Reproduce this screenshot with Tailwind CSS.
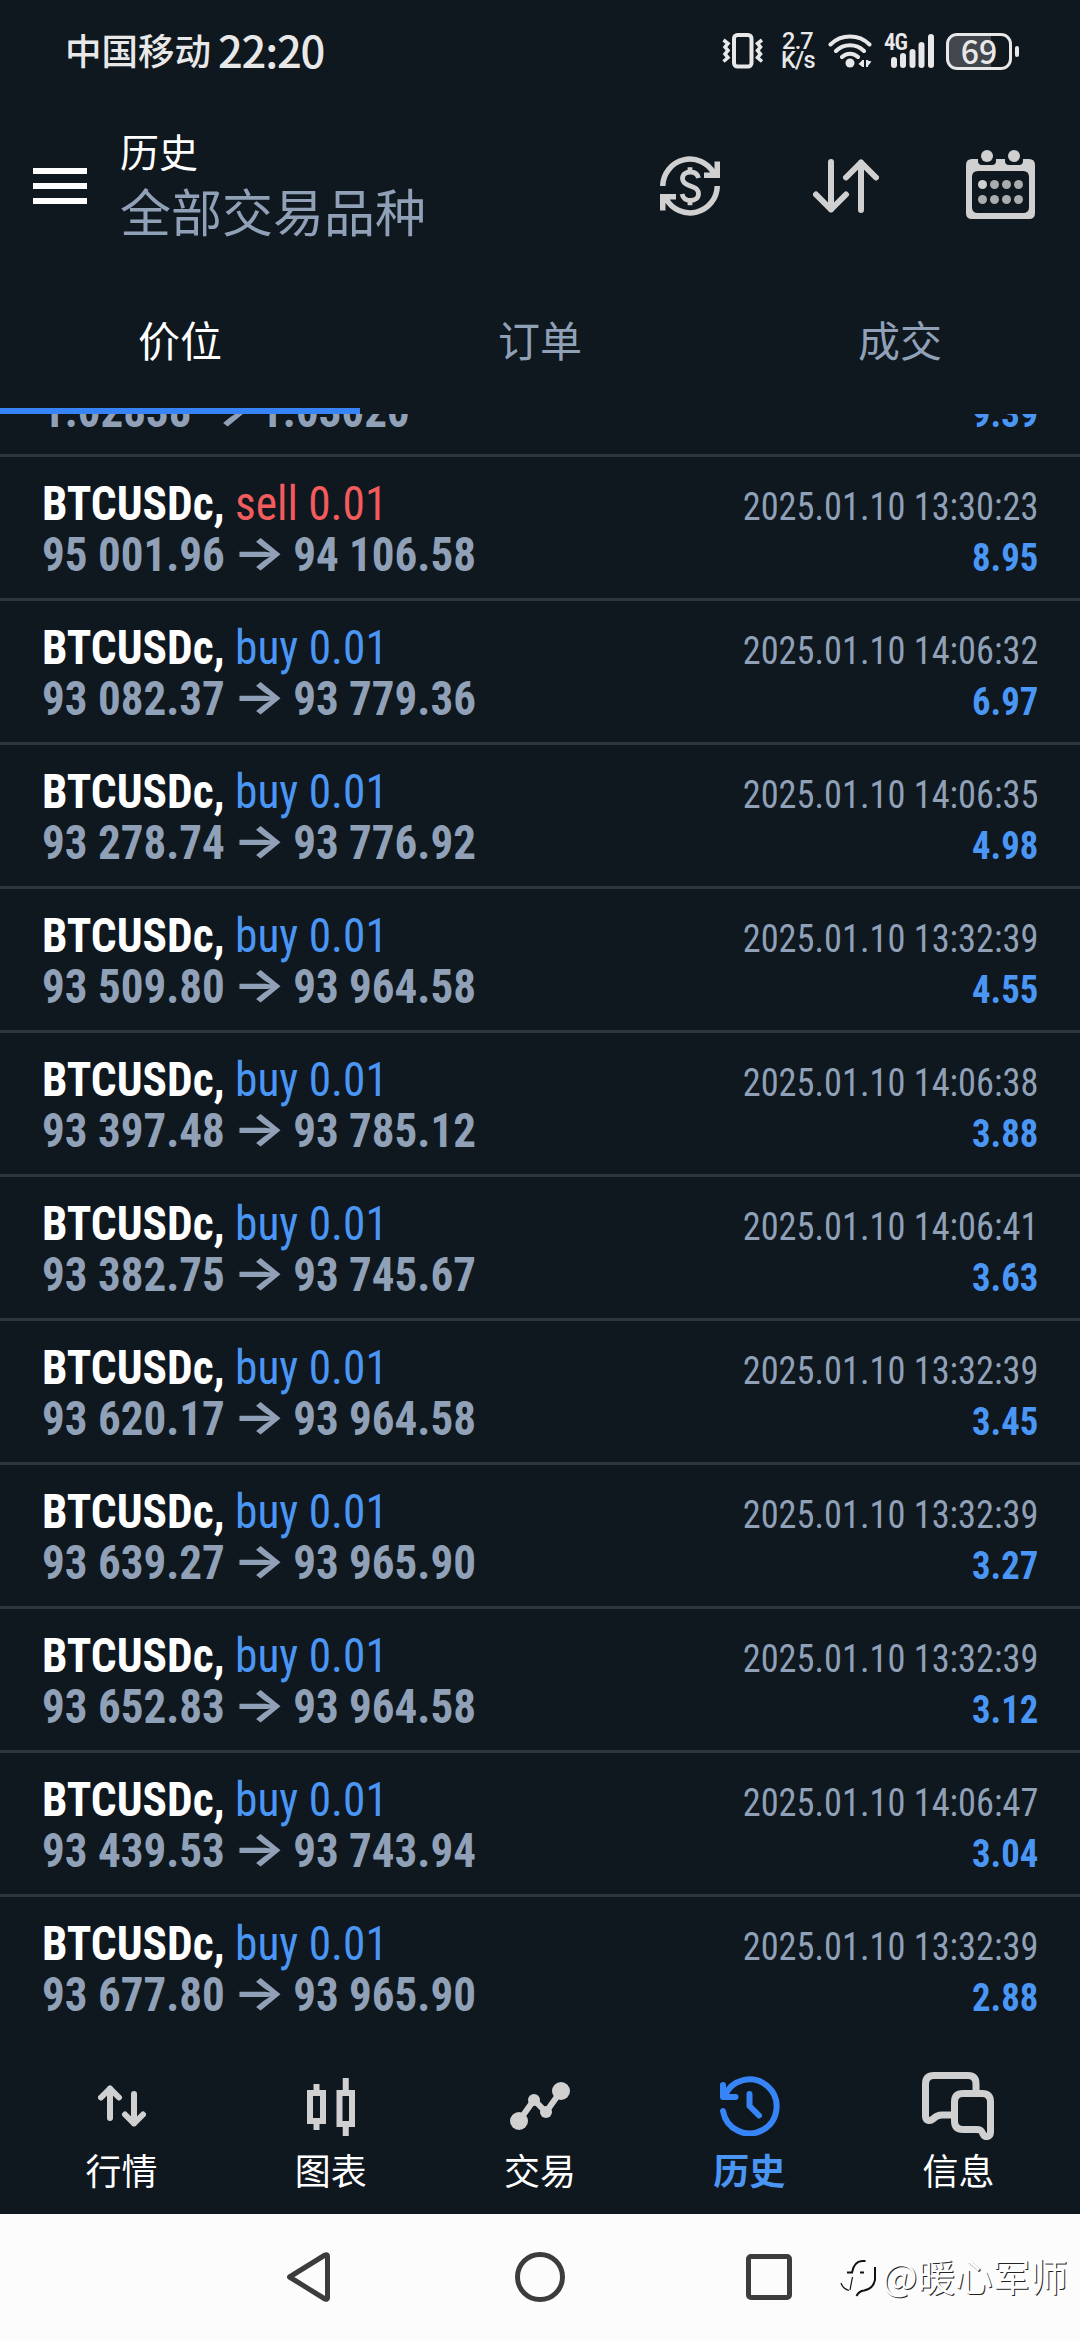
<!DOCTYPE html>
<html lang="zh-CN">
<head>
<meta charset="utf-8">
<title>历史</title>
<script src="https://cdn.jsdelivr.net/npm/@tailwindcss/browser@4"></script>
</head>
<body class="w-[1080px] h-[2340px] overflow-hidden bg-[#0f171f] font-['Noto_Sans_CJK_SC',sans-serif] text-white flex flex-col">

<!-- status bar -->
<header class="h-[102px] shrink-0 flex items-center pl-[65px] pr-[61px] text-[#e8e8e8]">
  <span class="text-[36.5px] font-medium leading-none -mt-[2px]">中国移动</span>
  <span class="ml-[7px] text-[43.5px] font-medium leading-none tracking-[-1.2px] -mt-[2px]">22:20</span>
  <div class="ml-auto flex items-center">
    <svg class="w-[42px] h-[36px]" viewBox="0 0 42 36" fill="none" stroke="#e8e8e8">
      <rect x="12" y="2" width="17.5" height="31.5" rx="3.5" stroke-width="4"/>
      <path d="M1.5 7l4.5 3.500-3 3.500 3 3.500-3 3.500 3 3.500-4.500 4M40 7l-4.500 3.500 3 3.500-3 3.500 3 3.500-3 3.500 4.500 4" stroke-width="3.500"/>
    </svg>
    <div class="ml-[17px] w-[33px] text-[23.500px] leading-[19px] font-medium text-center font-['Roboto'] tracking-[-0.8px] whitespace-nowrap"><div>2.7</div><div>K/s</div></div>
    <svg class="ml-[14px] w-[45px] h-[36px]" viewBox="0 0 45 36" fill="none" stroke="#e8e8e8" stroke-linecap="round" stroke-width="4">
      <path d="M2.500 11.500a28 28 0 0 1 39 0M8 18a20 20 0 0 1 28 0M14 24a11.500 11.500 0 0 1 16 0"/>
      <circle cx="22" cy="30" r="4.500" fill="#e8e8e8" stroke="none"/>
      <path d="M30.500 31l3.500-3.500v6zM43.500 28.500l-4 5v-6z" fill="#e8e8e8" stroke="none"/><path d="M35 27v7M39 27v7" stroke-width="2" stroke-linecap="butt"/>
    </svg>
    <div class="relative ml-[11px] w-[50px] h-[36px]">
      <span class="absolute left-0 top-0 text-[23px] leading-[19px] font-semibold tracking-[-1px] font-['Roboto'] font-stretch-[85%]">4G</span>
      <svg class="absolute inset-0" viewBox="0 0 50 36" fill="#e8e8e8"><rect x="7" y="24" width="6" height="11" rx="3"/><rect x="16" y="20" width="6" height="15" rx="3"/><rect x="25.500" y="16" width="6" height="19" rx="3"/><rect x="34.500" y="9" width="6" height="26" rx="3"/><rect x="44" y="1" width="6" height="34" rx="3"/></svg>
    </div>
    <div class="ml-[12px] w-[66px] h-[37px] rounded-[11px] border-[3px] border-[#e8e8e8] bg-linear-to-r from-[#41474d] from-70% to-transparent to-70% flex items-center justify-center text-[32px] font-medium leading-none"><span class="-mt-[3px]">69</span></div>
    <div class="ml-[3px] w-[4px] h-[11px] rounded bg-[#e8e8e8]"></div>
  </div>
</header>

<!-- app bar -->
<div class="h-[168px] shrink-0 flex pl-[33px] pr-[45px]">
  <div class="mt-[66px] flex flex-col gap-[9px]"><i class="block w-[54px] h-[6px] bg-white"></i><i class="block w-[54px] h-[6px] bg-white"></i><i class="block w-[54px] h-[6px] bg-white"></i></div>
  <div class="ml-[33px] mt-[20px]">
    <h1 class="text-[39px] leading-[56px]">历史</h1>
    <p class="text-[51px] leading-[64px] text-[#90a1b7]">全部交易品种</p>
  </div>
  <div class="ml-auto flex items-start">
    <svg class="mt-[54px] w-[60px] h-[60px]" viewBox="0 0 60 60" fill="none" stroke="#d0d0d0" stroke-width="5.500">
      <path d="M2.750 30A27.250 27.250 0 0 1 54 17.500M57.250 5.500V19.250H44"/>
      <path d="M57.250 30A27.250 27.250 0 0 1 6 42.500M2.750 54.500V40.750H16"/>
      <path d="M38.500 22C37.500 18 34.500 16 30.500 16C26 16 22.500 18.500 22.500 22.500C22.500 26 25 27.800 28.500 29.200L33 31C36.500 32.300 38.500 34.500 38.500 37.700C38.500 42 35 44.500 30.500 44.500C26 44.500 23 42 22 38M30 11.300V17M30 44V49.300" stroke-width="4.800"/>
    </svg>
    <svg class="ml-[93px] mt-[57px] w-[66px] h-[54px]" viewBox="0 0 66 54" fill="none" stroke="#d0d0d0" stroke-width="6" stroke-linecap="round" stroke-linejoin="round">
      <path d="M18 3V50.500M3 35.500L18 50.500L33 35.500M48 51V3.500M33 18.500L48 3.500L63 18.500"/>
    </svg>
    <svg class="ml-[87px] mt-[48px] w-[69px] h-[69px]" viewBox="0 0 69 69" fill="#d0d0d0">
      <path fill-rule="evenodd" d="M6 9H12V11Q12 15 16 15H26Q30 15 30 11V9H39V11Q39 15 43 15H53Q57 15 57 11V9H63Q69 9 69 15V63Q69 69 63 69H6Q0 69 0 63V15Q0 9 6 9ZM12 21Q6 21 6 27V57Q6 63 12 63H57Q63 63 63 57V27Q63 21 57 21Z"/>
      <circle cx="21" cy="6" r="6"/><circle cx="48" cy="6" r="6"/><circle cx="16.500" cy="34.500" r="4.500"/>
      <g fill="#a9abaf"><circle cx="28.500" cy="34.500" r="4.500"/><circle cx="40.500" cy="34.500" r="4.500"/><circle cx="52.500" cy="34.500" r="4.500"/><circle cx="16.500" cy="49.500" r="4.500"/><circle cx="28.500" cy="49.500" r="4.500"/><circle cx="40.500" cy="49.500" r="4.500"/><circle cx="52.500" cy="49.500" r="4.500"/></g>
    </svg>
  </div>
</div>

<!-- tabs -->
<nav class="h-[144px] shrink-0 grid grid-cols-3 text-center text-[42px] leading-[62px] text-[#90a1b7]">
  <div class="pt-[38px] h-[144px] border-b-[6px] border-[#3784f7] text-white">价位</div>
  <div class="pt-[38px]">订单</div>
  <div class="pt-[38px]">成交</div>
</nav>

<!-- deals -->
<main id="deals" class="h-[1613px] shrink-0 overflow-hidden flex flex-col justify-start font-['Roboto_Condensed','Roboto',sans-serif] font-stretch-condensed"></main>

<!-- bottom navigation -->
<nav class="h-[187px] shrink-0 px-[17px] grid grid-cols-5 justify-items-center text-[36px]">
  <div class="flex flex-col items-center"><div class="h-[104px] pt-[4px] flex"><svg class="w-[48px] h-[42px] mt-[54px]" viewBox="0 0 48 42" fill="none" stroke="#d0d0d0" stroke-width="6" stroke-linecap="round" stroke-linejoin="round"><path d="M12 33V3.500M3 12.500L12 3.500L21 12.500M36 9V38.500M27 29.500L36 38.500L45 29.500"/></svg></div><span class="mt-[12px] leading-[52px]">行情</span></div>
  <div class="flex flex-col items-center"><div class="h-[104px] pt-[4px] flex"><svg class="w-[48px] h-[58px] mt-[47px]" viewBox="0 0 48 58" fill="none" stroke="#d0d0d0" stroke-width="6"><path d="M3 15H16V43H3ZM9.500 6V12M9.500 46V52M32.500 15H45V46H32.500ZM38.750 0V12M38.750 49V58"/></svg></div><span class="mt-[12px] leading-[52px]">图表</span></div>
  <div class="flex flex-col items-center"><div class="h-[104px] pt-[4px] flex"><svg class="w-[60px] h-[48px] mt-[51px]" viewBox="0 0 60 48" fill="#d0d0d0"><path d="M9 39L24 18L36 30L51 9" fill="none" stroke="#d0d0d0" stroke-width="6"/><circle cx="9" cy="39" r="9"/><circle cx="24" cy="18" r="6"/><circle cx="36" cy="30" r="6"/><circle cx="51" cy="9" r="9"/></svg></div><span class="mt-[12px] leading-[52px]">交易</span></div>
  <div class="flex flex-col items-center"><div class="h-[104px] pt-[4px] flex"><svg class="w-[61px] h-[60px] mt-[45px]" viewBox="0 0 61 60" fill="none" stroke="#3784f7" stroke-width="6" stroke-linecap="round" stroke-linejoin="round"><path d="M4 35A27 27 0 1 0 5.500 20.500M4 9V21H16.500M30.500 18V30L40 39.500"/></svg></div><span class="mt-[12px] leading-[52px] font-bold text-[#4a96f5]">历史</span></div>
  <div class="flex flex-col items-center"><div class="h-[104px] pt-[4px] flex"><svg class="w-[72px] h-[68px] mt-[41px]" viewBox="0 0 72 68" fill="none" stroke="#d0d0d0" stroke-width="7" stroke-linejoin="round"><path d="M54 21V12Q54 3.500 46 3.500H12Q3.500 3.500 3.500 12V44C3.500 49 8 49.500 11 47C14 44 16 43 20 43H31"/><path d="M41 21.500H60Q68.500 21.500 68.500 30V60C68.500 65.500 62.500 66 61 62C59.500 58 58 57.500 54 57.500H41Q32.500 57.500 32.500 49V30Q32.500 21.500 41 21.500Z"/></svg></div><span class="mt-[12px] leading-[52px]">信息</span></div>
</nav>

<!-- system navigation -->
<footer class="relative h-[126px] shrink-0 bg-[#fcfcfc] flex items-center pl-[287px]">
  <svg class="w-[43px] h-[50px]" viewBox="0 0 43 50" fill="none" stroke="#3c3c3c" stroke-width="5" stroke-linejoin="round"><path d="M2.500 25L38 3Q40.500 2 40.500 4V46Q40.500 48 38 47Z"/></svg>
  <svg class="ml-[185px] w-[50px] h-[50px]" viewBox="0 0 50 50" fill="none" stroke="#3c3c3c" stroke-width="5"><circle cx="25" cy="25" r="22.500"/></svg>
  <div class="ml-[181px] w-[46px] h-[46px] border-[5px] border-[#3c3c3c] rounded-[5px]"></div>
  <div class="absolute left-[839px] top-[38px] flex items-start">
    <svg class="mt-[6px] w-[40px] h-[46px]" viewBox="0 0 40 46" fill="none" stroke="#111">
      <path d="M2 25Q4 31 10 32.500M11 32L13.500 19" stroke-width="1.200"/>
      <path d="M8 14.500H13Q15 3.500 23 3H26.500M21 14.500H25" stroke-width="2"/>
      <path d="M36 9V22Q34 31 25 32.500Q20 33 17.500 38" stroke-width="2"/>
    </svg>
    <span class="ml-[3px] text-[37.500px] leading-[46px] text-[#fdfdfd] text-shadow-[1px_1px_0.500px_#222]">@暖心军师</span>
  </div>
</footer>

<script>
const deals = [
  ["EURUSDc", "buy", "1.02838", "1.03020", "2025.01.10 13:30:23", "9.39"],
  ["BTCUSDc", "sell", "95 001.96", "94 106.58", "2025.01.10 13:30:23", "8.95"],
  ["BTCUSDc", "buy", "93 082.37", "93 779.36", "2025.01.10 14:06:32", "6.97"],
  ["BTCUSDc", "buy", "93 278.74", "93 776.92", "2025.01.10 14:06:35", "4.98"],
  ["BTCUSDc", "buy", "93 509.80", "93 964.58", "2025.01.10 13:32:39", "4.55"],
  ["BTCUSDc", "buy", "93 397.48", "93 785.12", "2025.01.10 14:06:38", "3.88"],
  ["BTCUSDc", "buy", "93 382.75", "93 745.67", "2025.01.10 14:06:41", "3.63"],
  ["BTCUSDc", "buy", "93 620.17", "93 964.58", "2025.01.10 13:32:39", "3.45"],
  ["BTCUSDc", "buy", "93 639.27", "93 965.90", "2025.01.10 13:32:39", "3.27"],
  ["BTCUSDc", "buy", "93 652.83", "93 964.58", "2025.01.10 13:32:39", "3.12"],
  ["BTCUSDc", "buy", "93 439.53", "93 743.94", "2025.01.10 14:06:47", "3.04"],
  ["BTCUSDc", "buy", "93 677.80", "93 965.90", "2025.01.10 13:32:39", "2.88"],
];
// The first deal is scrolled under the tabs: only the foot of its second line shows.
document.getElementById("deals").innerHTML = deals.map(([symbol, side, open, close, time, profit], i) => `
  <div class="${i ? "" : "-mt-[101px] "}h-[144px] shrink-0 border-b-[3px] border-[#2c3641] px-[42px] pt-[21px] whitespace-nowrap">
    ${i ? `<div class="h-[51px] flex items-baseline justify-between leading-[51px]">
      <div class="text-[48px] origin-left scale-x-[0.945]"><b>${symbol},</b> <span class="${side === "buy" ? "text-[#4a96f5]" : "text-[#f25c5c]"}">${side} 0.01</span></div>
      <div class="text-[39.5px] text-[#90a1b7] origin-right scale-x-[0.92]">${time}</div>
    </div>` : `<div class="h-[51px]"></div>`}
    <div class="h-[51px] flex items-baseline justify-between leading-[51px] font-bold">
      <div class="text-[48px] text-[#90a1b7] origin-left scale-x-[0.938]">${open}<span class="inline-block w-[73px] text-center font-['Inter'] font-bold text-[46px] leading-[40px] -translate-y-[2.5px] scale-x-[1.3]">→</span>${close}</div>
      <div class="text-[39.5px] text-[#4a96f5] origin-right scale-x-[0.93]">${profit}</div>
    </div>
  </div>`).join("");
</script>
</body>
</html>
